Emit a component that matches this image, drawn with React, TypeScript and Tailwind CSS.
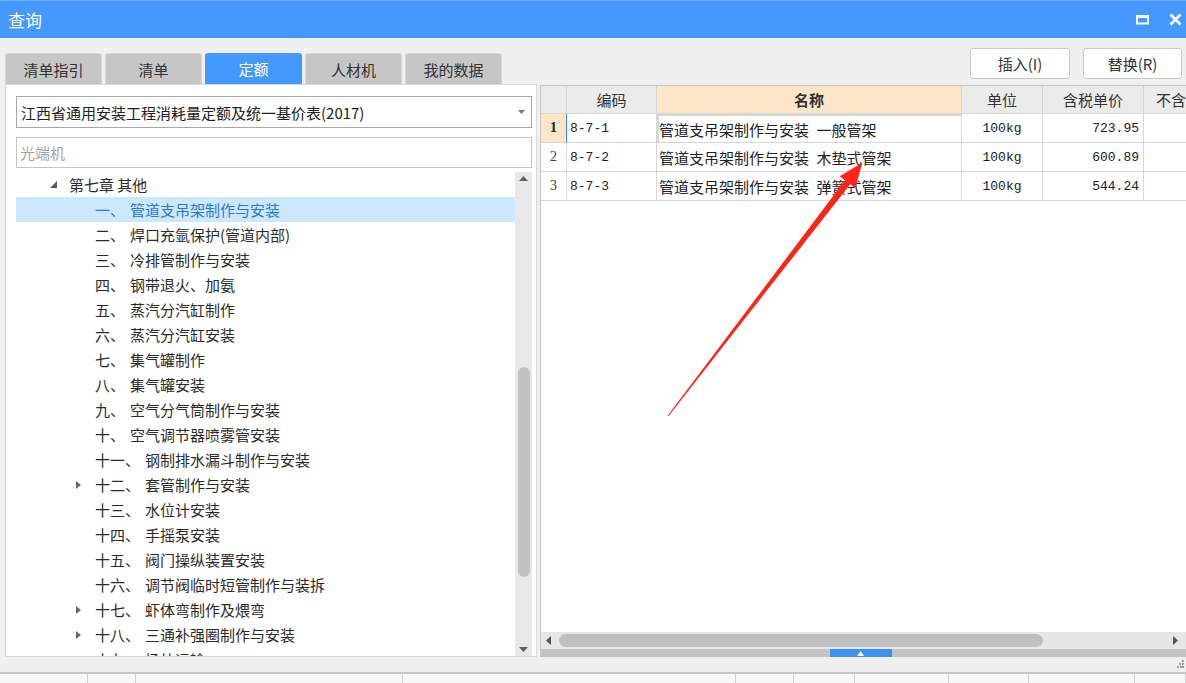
import type { ReactNode } from "react";

type TreeItem = { label: string; name: string; expandable?: boolean; selected?: boolean };

const treeItems: TreeItem[] = [
  { label: "一、", name: "管道支吊架制作与安装", selected: true },
  { label: "二、", name: "焊口充氩保护(管道内部)" },
  { label: "三、", name: "冷排管制作与安装" },
  { label: "四、", name: "钢带退火、加氨" },
  { label: "五、", name: "蒸汽分汽缸制作" },
  { label: "六、", name: "蒸汽分汽缸安装" },
  { label: "七、", name: "集气罐制作" },
  { label: "八、", name: "集气罐安装" },
  { label: "九、", name: "空气分气筒制作与安装" },
  { label: "十、", name: "空气调节器喷雾管安装" },
  { label: "十一、", name: "钢制排水漏斗制作与安装" },
  { label: "十二、", name: "套管制作与安装", expandable: true },
  { label: "十三、", name: "水位计安装" },
  { label: "十四、", name: "手摇泵安装" },
  { label: "十五、", name: "阀门操纵装置安装" },
  { label: "十六、", name: "调节阀临时短管制作与装拆" },
  { label: "十七、", name: "虾体弯制作及煨弯", expandable: true },
  { label: "十八、", name: "三通补强圈制作与安装", expandable: true },
  { label: "十九、", name: "场外运输" },
];

const rows = [
  { n: 1, code: "8-7-1", name: "管道支吊架制作与安装\u2002一般管架", unit: "100kg", price: "723.95" },
  { n: 2, code: "8-7-2", name: "管道支吊架制作与安装\u2002木垫式管架", unit: "100kg", price: "600.89" },
  { n: 3, code: "8-7-3", name: "管道支吊架制作与安装\u2002弹簧式管架", unit: "100kg", price: "544.24" },
];

const tabs = ["清单指引", "清单", "定额", "人材机", "我的数据"];

const cols = "grid grid-cols-[26px_90px_305px_81px_101px_100px]";

function Cell({ className = "", children }: { className?: string; children?: ReactNode }) {
  return <div className={`flex items-center border-r border-b border-[#d6d6d6] overflow-hidden whitespace-nowrap ${className}`}>{children}</div>;
}

function RightTri() {
  return (
    <svg width="5" height="8" viewBox="0 0 5 8">
      <polygon points="0,0 5,4 0,8" fill="#6b6b6b" />
    </svg>
  );
}

function TreeRow({ item }: { item: TreeItem }) {
  return (
    <div className={`flex h-[25px] items-center pl-[57px] ${item.selected ? "bg-[#cce8ff] text-[#2a78d6]" : "text-[#2b2b2b]"}`}>
      <div className="flex w-[22px] items-center pl-[3px]">{item.expandable && <RightTri />}</div>
      <span>{item.label}</span>
      <span className="ml-[5px]">{item.name}</span>
    </div>
  );
}

export default function App() {
  return (
    <div className="relative flex h-[683px] w-[1186px] flex-col overflow-hidden bg-[#f0f0f0] font-['Noto_Sans_CJK_SC',sans-serif] leading-none">
      {/* title bar */}
      <div className="flex h-[38px] items-center justify-between border-t border-[#6cb0ff] bg-[#4598fc] pl-[8px] pr-[4px] text-white">
        <span className="text-[17px]">查询</span>
        <div className="flex items-center gap-[20px]">
          <svg width="13" height="10" viewBox="0 0 13 10">
            <rect x="1" y="1.5" width="11" height="7" fill="none" stroke="white" strokeWidth="2" />
            <rect x="0" y="0" width="13" height="3" fill="white" />
          </svg>
          <svg width="13" height="13" viewBox="0 0 13 13">
            <path d="M1.5 1.5 L11.5 11.5 M11.5 1.5 L1.5 11.5" stroke="white" strokeWidth="2.6" />
          </svg>
        </div>
      </div>

      <div className="flex h-[619px]">
        {/* left column */}
        <div className="flex w-[537px] flex-col pl-[5px] pt-[15px]">
          <div className="flex h-[31px] gap-[3px]">
            {tabs.map((t) => (
              <div
                key={t}
                className={`flex w-[97px] items-center justify-center rounded-t-[3px] text-[15px] ${
                  t === "定额" ? "bg-[#4499ff] text-white" : "border-x border-t border-[#d6d6d6] bg-[#c6c6c6] text-[#333]"
                }`}
              >
                {t}
              </div>
            ))}
          </div>
          <div className="flex flex-1 flex-col overflow-hidden border border-[#dadada] bg-white pl-[10px] pr-[4px] pt-[11px]">
            <div className="flex h-[32px] shrink-0 items-center justify-between border border-[#a8a8a8] pl-[4px] pr-[6px] text-[15px] text-[#222]">
              <span>江西省通用安装工程消耗量定额及统一基价表(2017)</span>
              <svg width="7" height="4" viewBox="0 0 7 4">
                <polygon points="0,0 7,0 3.5,4" fill="#7a7a7a" />
              </svg>
            </div>
            <input
              readOnly
              placeholder="光端机"
              className="mt-[9px] h-[31px] shrink-0 border border-[#c4c4c4] pl-[3px] text-[15px] outline-none placeholder:text-[#a3a3a3]"
            />
            <div className="mt-[4px] flex flex-1 overflow-hidden">
              <div className="flex-1 overflow-hidden text-[15px]">
                <div className="flex h-[25px] items-center pl-[34px] text-[#2b2b2b]">
                  <svg width="7" height="7" viewBox="0 0 7 7" className="mr-[12px]">
                    <polygon points="7,0 7,7 0,7" fill="#5a5a5a" />
                  </svg>
                  <span>第七章 其他</span>
                </div>
                {treeItems.map((item) => (
                  <TreeRow key={item.label} item={item} />
                ))}
              </div>
              <div className="flex w-[17px] flex-col items-center bg-[#e8e8e8]">
                <svg width="9" height="5" viewBox="0 0 9 5" className="mt-[4px]">
                  <polygon points="0,5 9,5 4.5,0" fill="#606060" />
                </svg>
                <div className="mt-[186px] h-[210px] w-[12px] rounded-full bg-[#c2c2c2]" />
                <div className="flex-1" />
                <svg width="9" height="5" viewBox="0 0 9 5" className="mb-[4px]">
                  <polygon points="0,0 9,0 4.5,5" fill="#606060" />
                </svg>
              </div>
            </div>
          </div>
        </div>

        {/* right column */}
        <div className="ml-[3px] flex w-[646px] flex-col pt-[10px]">
          <div className="flex h-[31px] shrink-0 justify-end gap-[13px] pr-[4px]">
            <button className="w-[100px] rounded-[3px] border border-[#c9c9c9] bg-white text-[15px] text-[#333]">插入(I)</button>
            <button className="w-[99px] rounded-[3px] border border-[#c9c9c9] bg-white text-[15px] text-[#333]">替换(R)</button>
          </div>
          <div className="mt-[6px] flex flex-1 flex-col overflow-hidden border-l border-t border-[#c6c6c6] bg-white">
            <div className={`${cols} h-[28px] shrink-0 bg-[#ebebeb] text-[15px] text-[#333]`}>
              <Cell />
              <Cell className="justify-center">编码</Cell>
              <Cell className="justify-center bg-[#fde6c8] font-bold">名称</Cell>
              <Cell className="justify-center">单位</Cell>
              <Cell className="justify-center">含税单价</Cell>
              <Cell className="justify-center">不含税单价</Cell>
            </div>
            {rows.map((r) => (
              <div key={r.n} className={`${cols} h-[29px] shrink-0 text-[#222]`}>
                <Cell
                  className={`justify-center font-['Liberation_Serif',serif] text-[14px] ${
                    r.n === 1 ? "border-r-[#3a8ae8] bg-[#fde6c8] font-bold" : "text-[#444]"
                  }`}
                >
                  {r.n}
                </Cell>
                <Cell className="pl-[3px] font-['Liberation_Mono',monospace] text-[13px]">{r.code}</Cell>
                <Cell className={`text-[15px] ${r.n === 1 ? "border-2 border-[#8c8c8c] pl-0" : "pl-[2px]"}`}>{r.name}</Cell>
                <Cell className="justify-center font-['Liberation_Mono',monospace] text-[13px]">{r.unit}</Cell>
                <Cell className="justify-end pr-[4px] font-['Liberation_Mono',monospace] text-[13px]">{r.price}</Cell>
                <Cell />
              </div>
            ))}
            <div className="flex-1" />
            <div className="flex h-[17px] shrink-0 items-center bg-[#e6e6e6] px-[5px]">
              <svg width="5" height="9" viewBox="0 0 5 9">
                <polygon points="5,0 5,9 0,4.5" fill="#555" />
              </svg>
              <div className="ml-[8px] h-[13px] w-[484px] rounded-full bg-[#c0c0c0]" />
              <div className="flex-1" />
              <svg width="5" height="9" viewBox="0 0 5 9" className="mr-[3px]">
                <polygon points="0,0 5,4.5 0,9" fill="#555" />
              </svg>
            </div>
            <div className="flex h-[8px] shrink-0 justify-center bg-[#c3c3c3] pr-[6px]">
              <div className="flex w-[62px] items-center justify-center bg-[#3d8ff0]">
                <svg width="7" height="5" viewBox="0 0 7 5">
                  <polygon points="0,5 7,5 3.5,0" fill="white" />
                </svg>
              </div>
            </div>
          </div>
        </div>
      </div>

      {/* footer / status */}
      <div className="flex h-[26px] flex-col">
        <div className="flex h-[15px] justify-end pr-[2px] pt-[3px]">
          <svg width="7" height="8" viewBox="0 0 7 8">
            <rect x="5" y="0" width="2" height="2" fill="#9a9a9a" />
            <rect x="2" y="3" width="2" height="2" fill="#9a9a9a" />
            <rect x="5" y="3" width="2" height="2" fill="#9a9a9a" />
            <rect x="0" y="6" width="2" height="2" fill="#9a9a9a" />
            <rect x="3" y="6" width="2" height="2" fill="#9a9a9a" />
            <rect x="5" y="6" width="2" height="2" fill="#9a9a9a" />
          </svg>
        </div>
        <div className="flex flex-1 border-t-2 border-[#c6c6c6] bg-[#f8f8f8]">
          {[88, 48, 267, 333, 58, 61, 94, 80, 106, 51].map((w, i) => (
            <div key={i} style={{ width: w }} className="border-r border-[#cfcfcf]" />
          ))}
        </div>
      </div>

      {/* red annotation arrow */}
      <svg className="pointer-events-none absolute inset-0" width="1186" height="683" viewBox="0 0 1186 683">
        <polygon
          points="668.4,416.3 850.2,184.2 855.2,188.2 862.5,162.5 839.8,176.2 845.0,180.3 667.6,415.7"
          fill="#ff2418"
        />
      </svg>
    </div>
  );
}
